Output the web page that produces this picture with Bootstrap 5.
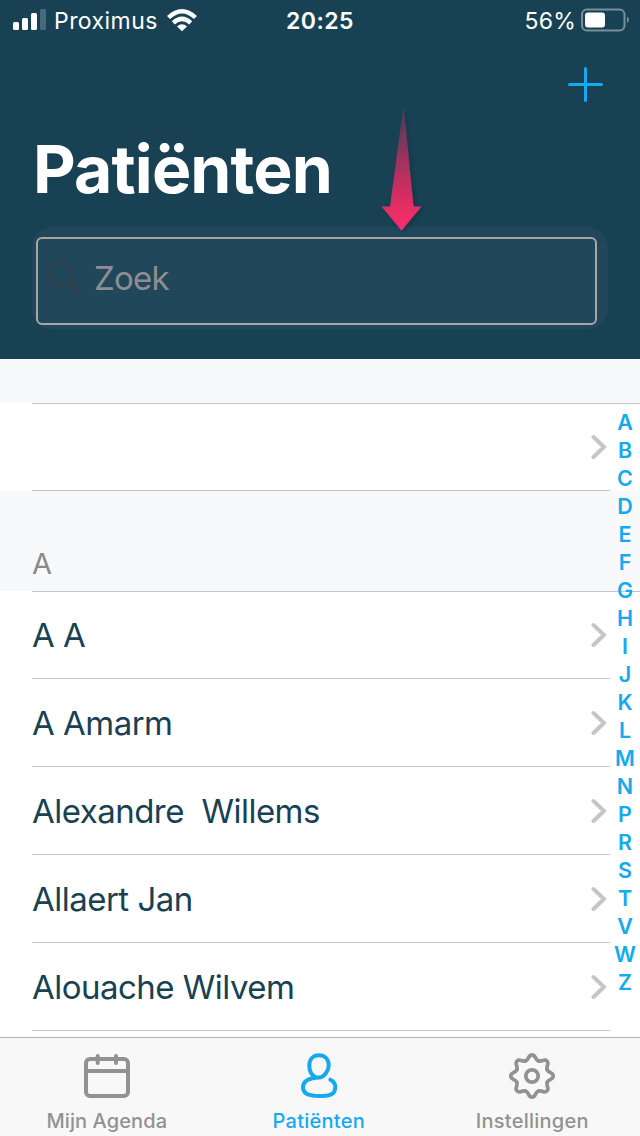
<!DOCTYPE html>
<html lang="nl">
<head>
<meta charset="utf-8">
<meta name="viewport" content="width=device-width, initial-scale=1">
<title>Patiënten</title>
<link href="https://cdn.jsdelivr.net/npm/bootstrap@5.3.0/dist/css/bootstrap.min.css" rel="stylesheet">
<style>
  body { font-family: Inter, "Liberation Sans", sans-serif; background: #fff; color: #194154; }
  svg { display: block; flex: none; }
  .screen { width: 640px; height: 1136px; }
  .top-area { background: #194154; height: 359px; }
  .status-line { height: 40px; font-size: 23px; line-height: 40px; padding: 0 10px 0 13px; }
  .status-line span { padding-top: 1px; }
  .carrier { letter-spacing: .45px; margin-left: 7px; }
  .charge { margin-right: 5px; letter-spacing: .2px; }
  .clock { left: 0; right: 0; top: 0; font-weight: 600; letter-spacing: .5px; }
  .title-text { font-size: 66px; line-height: 80px; font-weight: 700; letter-spacing: -.85px; margin: 45px 0 0 33px; }
  .add-row { height: 44px; padding: 26px 36px 0 0; }
  .search-shell { background: #21475b; border-radius: 20px; margin: 18px 32px 0; height: 102px; padding: 10px 11px 3px 4px; }
  .search-box { border: 2px solid #a9a5a2; border-radius: 6px; height: 88px; padding: 0 0 5px 10px; }
  .search-label { color: #8f8d92; font-size: 33px; letter-spacing: -.8px; margin-left: 12px; }
  .pointer { left: 372px; top: 98px; }
  .list-area { background: #f8f9fb; }
  .gap-top { height: 44px; }
  .letter-head { height: 100px; padding: 0 0 7px 32px; font-size: 29px; line-height: 40px; color: #8a8a8d; }
  .entries { background: #fff; }
  .entries::before { content: ""; position: absolute; left: 32px; right: 0; top: 0; height: 1px; background: #c6c6c8; }
  .entry { height: 88px; margin-left: 32px; width: 578px; padding-right: 3px; border-bottom: 1px solid #c6c6c8; font-size: 33px; letter-spacing: -.52px; white-space: pre; }
  .entry span { padding-top: 2px; }
  .letters { top: 49px; right: 0; width: 30px; font-size: 21.5px; line-height: 28px; font-weight: 600; color: #17a9f0; }
  .tab-bar { height: 99px; background: #f8f8f8; border-top: 1px solid #b2b2b3; padding-left: 1px; }
  .tab { width: 212.5px; color: #929292; font-size: 20px; line-height: 24px; font-weight: 500; letter-spacing: .25px; padding-top: 13px; }
  .tab span { margin-top: 8px; }
  .tab:first-child { letter-spacing: .1px; padding-right: 1px; }
  .tab.current { color: #17a9f0; padding-right: 2px; }
</style>
<script src="https://cdn.jsdelivr.net/npm/bootstrap@5.3.0/dist/js/bootstrap.bundle.min.js"></script>
</head>
<body>
<div class="screen d-flex flex-column overflow-hidden position-relative">
  <header class="top-area flex-shrink-0 text-white position-relative">
    <div class="status-line d-flex align-items-center position-relative">
      <svg width="34" height="22" viewBox="0 0 34 22" fill="#fff"><rect x="0" y="13" width="6" height="8" rx="1.5"/><rect x="9" y="9" width="6" height="12" rx="1.5"/><rect x="18" y="4" width="6" height="17" rx="1.5"/><rect x="27" y="0" width="6" height="21" rx="1.5" fill="#47697b"/></svg>
      <span class="carrier">Proximus</span>
      <svg class="ms-2" width="32" height="24" viewBox="0 0 32 24" fill="none" stroke="#fff" stroke-width="4.400"><path d="M2.500 9.500Q16-3 29.500 9.500"/><path d="M7.300 14.800Q16 7 24.700 14.800"/><path d="M11 18.400Q16 14.300 21 18.400L16 23.200Z" fill="#fff" stroke="none"/></svg>
      <span class="clock position-absolute text-center">20:25</span>
      <span class="charge ms-auto">56%</span>
      <svg width="49" height="24" viewBox="0 0 49 24"><rect x="1" y="1.500" width="42.500" height="21" rx="5" fill="none" stroke="#788f9a" stroke-width="2"/><rect x="4" y="4.500" width="20" height="15" rx="3" fill="#fff"/><path d="M46 8.500Q48 9.500 48 11.500T46 15Z" fill="#788f9a"/></svg>
    </div>
    <div class="add-row d-flex justify-content-end">
      <svg width="36" height="36" viewBox="0 0 36 36" stroke="#17a9f0" stroke-width="3" stroke-linecap="round"><path d="M1.500 18.500H33.500M17.500 2.500V34.500"/></svg>
    </div>
    <h1 class="title-text">Patiënten</h1>
    <div class="search-shell">
      <div class="search-box d-flex align-items-center">
        <svg width="34" height="36" viewBox="0 0 34 36" fill="none" stroke="#2f414d"><circle cx="13.300" cy="13" r="12" stroke-width="3"/><path d="M22 22L31.500 31" stroke-width="4.500"/></svg>
        <span class="search-label">Zoek</span>
      </div>
    </div>
    <svg class="pointer position-absolute" width="60" height="140" viewBox="0 0 60 140">
      <defs>
        <linearGradient id="fade" x1="0" y1="0" x2="0" y2="1"><stop offset="0" stop-color="#ff2c6b" stop-opacity=".15"/><stop offset=".5" stop-color="#ff2c6b" stop-opacity=".57"/><stop offset="1" stop-color="#ff2c6b"/></linearGradient>
        <filter id="shade" x="-30%" y="-10%" width="180%" height="130%"><feDropShadow dx="2" dy="1" stdDeviation="2" flood-color="#0b2633" flood-opacity=".6"/></filter>
      </defs>
      <path d="M31.500 7L41.500 108.500H49.500L29.500 132.500L9.500 108.500H18Z" fill="url(#fade)" filter="url(#shade)"/>
    </svg>
  </header>

  <main class="list-area flex-grow-1 position-relative overflow-hidden">
    <div class="gap-top"></div>
    <div class="entries position-relative">
      <div class="entry d-flex align-items-center"><svg class="ms-auto" width="16" height="26" viewBox="0 0 16 26" fill="none" stroke="#c5c5c7" stroke-width="4" stroke-linecap="round"><path d="M2.500 3L13 13L2.500 23"/></svg></div>
    </div>
    <div class="letter-head d-flex align-items-end">A</div>
    <div class="entries position-relative">
      <div class="entry d-flex align-items-center"><span>A A</span><svg class="ms-auto" width="16" height="26" viewBox="0 0 16 26" fill="none" stroke="#c5c5c7" stroke-width="4" stroke-linecap="round"><path d="M2.500 3L13 13L2.500 23"/></svg></div>
      <div class="entry d-flex align-items-center"><span>A Amarm</span><svg class="ms-auto" width="16" height="26" viewBox="0 0 16 26" fill="none" stroke="#c5c5c7" stroke-width="4" stroke-linecap="round"><path d="M2.500 3L13 13L2.500 23"/></svg></div>
      <div class="entry d-flex align-items-center"><span>Alexandre  Willems</span><svg class="ms-auto" width="16" height="26" viewBox="0 0 16 26" fill="none" stroke="#c5c5c7" stroke-width="4" stroke-linecap="round"><path d="M2.500 3L13 13L2.500 23"/></svg></div>
      <div class="entry d-flex align-items-center"><span>Allaert Jan</span><svg class="ms-auto" width="16" height="26" viewBox="0 0 16 26" fill="none" stroke="#c5c5c7" stroke-width="4" stroke-linecap="round"><path d="M2.500 3L13 13L2.500 23"/></svg></div>
      <div class="entry d-flex align-items-center"><span>Alouache Wilvem</span><svg class="ms-auto" width="16" height="26" viewBox="0 0 16 26" fill="none" stroke="#c5c5c7" stroke-width="4" stroke-linecap="round"><path d="M2.500 3L13 13L2.500 23"/></svg></div>
      <div class="pb-2"></div>
    </div>
    <div class="letters position-absolute d-flex flex-column text-center">
      <span>A</span><span>B</span><span>C</span><span>D</span><span>E</span><span>F</span><span>G</span><span>H</span><span>I</span><span>J</span><span>K</span><span>L</span><span>M</span><span>N</span><span>P</span><span>R</span><span>S</span><span>T</span><span>V</span><span>W</span><span>Z</span>
    </div>
  </main>

  <nav class="tab-bar flex-shrink-0 d-flex">
    <div class="tab d-flex flex-column align-items-center">
      <svg width="50" height="50" viewBox="0 0 50 50" fill="none" stroke="currentColor" stroke-width="4" stroke-linecap="round"><rect x="4" y="8" width="42" height="37" rx="4"/><path d="M4 20H46M15.700 5V12M34 5V12"/></svg>
      <span>Mijn Agenda</span>
    </div>
    <div class="tab current d-flex flex-column align-items-center">
      <svg width="50" height="50" viewBox="0 0 50 50" fill="none" stroke="currentColor" stroke-width="4" stroke-linecap="round"><path d="M36.300 28.700C39 30 41.500 33 41.300 36.500C41 43 37 45 25 45S9 42 9 36.500C9 30 15 27 25 26.500C30 26.300 34.700 20 34.700 14.500C34.700 8.500 31 4.300 25 4.300S15.300 8.500 15.300 14.500C15.300 19 17.500 24 21.500 26.300"/></svg>
      <span>Patiënten</span>
    </div>
    <div class="tab d-flex flex-column align-items-center">
      <svg width="50" height="50" viewBox="-25 -25 50 50" fill="none" stroke="currentColor" stroke-width="3.700" stroke-linecap="round"><defs><path id="tooth" d="M-6.300-15.200C-2.500-16.800-4-21.200 0-21.200S2.500-16.800 6.300-15.200"/></defs><circle r="6.200"/><use href="#tooth"/><use href="#tooth" transform="rotate(45)"/><use href="#tooth" transform="rotate(90)"/><use href="#tooth" transform="rotate(135)"/><use href="#tooth" transform="rotate(180)"/><use href="#tooth" transform="rotate(225)"/><use href="#tooth" transform="rotate(270)"/><use href="#tooth" transform="rotate(315)"/></svg>
      <span>Instellingen</span>
    </div>
  </nav>
</div>
</body>
</html>
